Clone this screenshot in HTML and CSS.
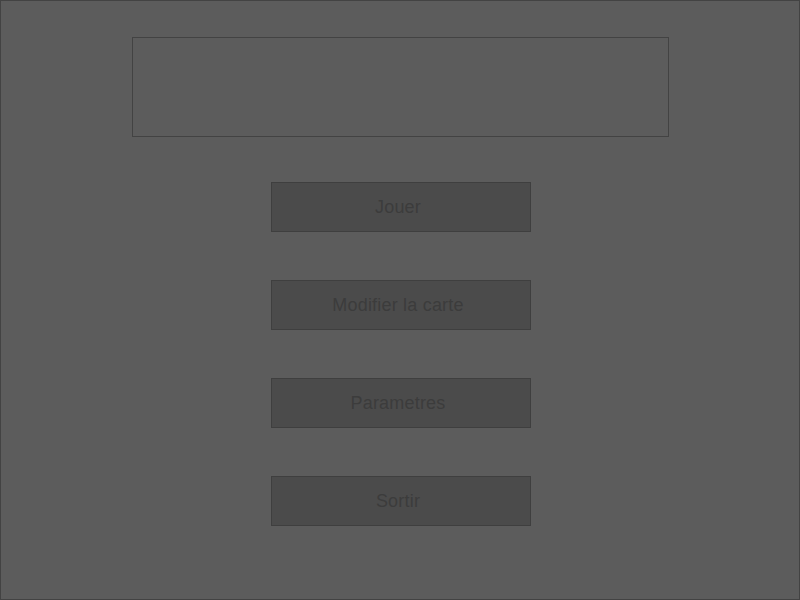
FILE: index.html
```html
<!DOCTYPE html>
<html>
<head>
<meta charset="utf-8">
<link rel="stylesheet" href="styles.css">
</head>
<body>
<div class="screen">
  <div class="title-box"></div>
  <div class="menu">
    <div class="btn">Jouer</div>
    <div class="btn">Modifier la carte</div>
    <div class="btn">Parametres</div>
    <div class="btn">Sortir</div>
  </div>
</div>
</body>
</html>
```
FILE: styles.css
```css
html, body {
  margin: 0;
  padding: 0;
  background: #5c5c5c;
}
.screen {
  box-sizing: border-box;
  width: 800px;
  height: 600px;
  border: 1px solid #434343;
  background: #5c5c5c;
  padding-top: 36px;
  display: flex;
  flex-direction: column;
  font-family: "Liberation Sans", Arial, sans-serif;
}
.title-box {
  box-sizing: border-box;
  width: 537px;
  height: 100px;
  margin-left: 131px;
  border: 1px solid #434343;
}
.menu {
  display: flex;
  flex-direction: column;
  gap: 48px;
  margin-top: 45px;
  margin-left: 270px;
}
.btn {
  box-sizing: border-box;
  width: 260px;
  height: 50px;
  padding: 0 6px 0 0;
  background: #4b4b4b;
  border: 1px solid #3f3f3f;
  color: #3c3c3c;
  font-size: 18px;
  letter-spacing: 0.2px;
  display: flex;
  align-items: center;
  justify-content: center;
}
```
